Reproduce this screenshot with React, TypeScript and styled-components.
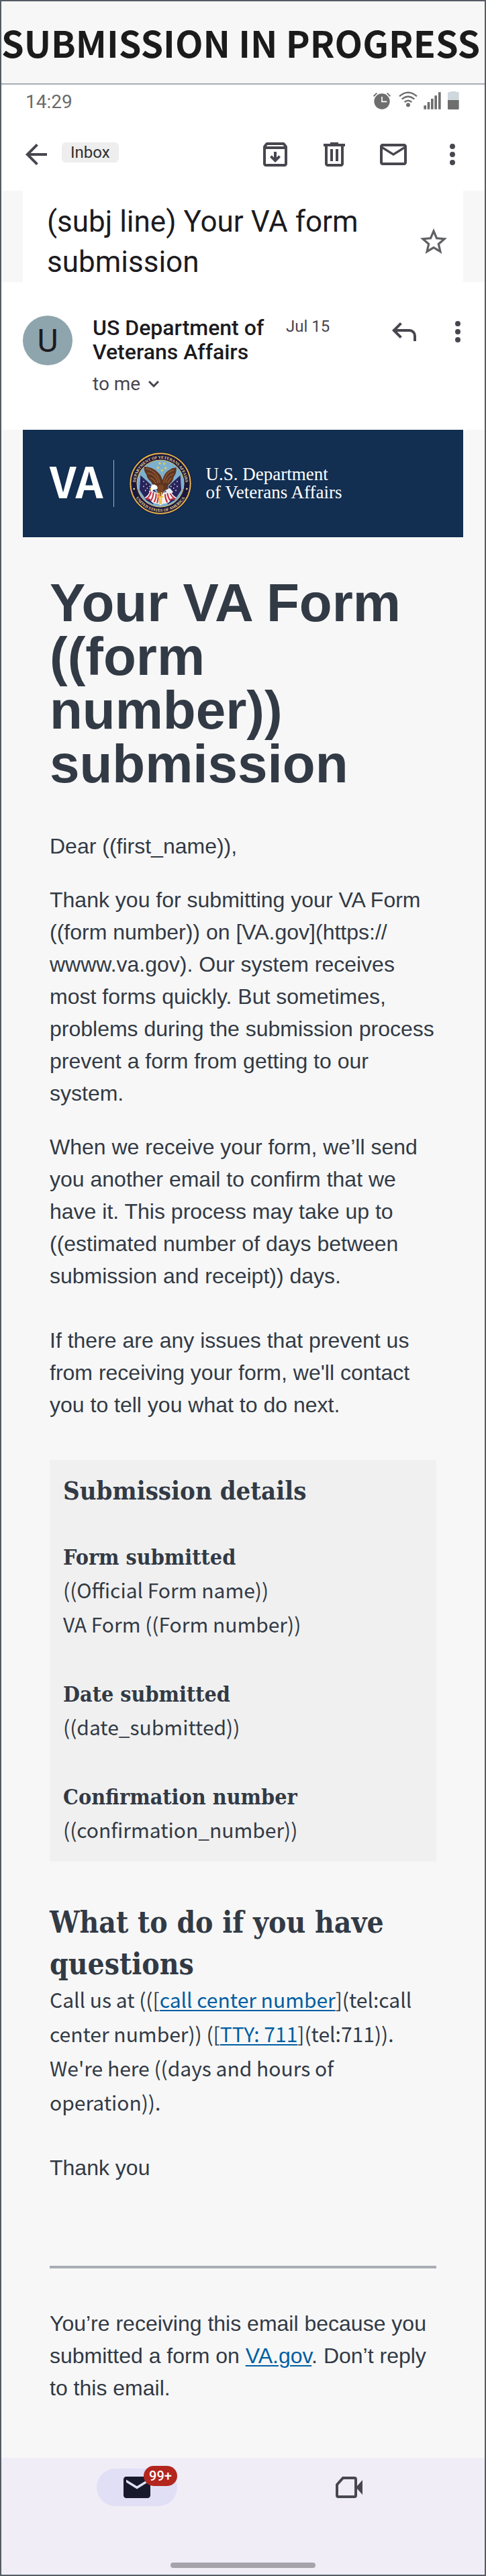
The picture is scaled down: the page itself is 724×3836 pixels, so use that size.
import React from 'react';
import styled, { createGlobalStyle } from 'styled-components';

const sans = '"Liberation Sans", Arial, sans-serif';
const source = '"Noto Sans CJK SC", "Source Sans Pro", sans-serif';
const slab = '"DejaVu Serif Condensed", "DejaVu Serif", serif';
const roboto = 'Roboto, sans-serif';

const ink = '#323a45';
const icon = '#48474f';
const muted = '#49454f';

const GlobalStyle = createGlobalStyle`
  *, *::before, *::after { box-sizing: border-box; }
  body { margin: 0; background: #f7f7f7; }
  h1, h2, h3, p, dl, dd, dt { margin: 0; }
  button { font: inherit; color: inherit; background: none; border: 0; padding: 0; cursor: pointer; }
`;

const Frame = styled.div`
  border: 2px solid #565c65;
  background: #f7f7f7;
  color: ${ink};
  font-family: ${sans};
  overflow: hidden;
`;

const BoardTitle = styled.h1`
  padding: 21px 0;
  border-bottom: 2px solid #a9aeb1;
  font: 700 54px/80px ${source};
  color: #1b1b1b;
  white-space: nowrap;
`;

const StatusBar = styled.div`
  display: flex;
  align-items: center;
  justify-content: space-between;
  height: 50px;
  padding: 2px 38px 0 36px;
  background: #fff;
  font: 400 28px/48px ${roboto};
  color: #6b6b6b;
`;

const StatusIcons = styled.svg`
  display: block;
  margin-bottom: 4px;
`;

const Toolbar = styled.div`
  display: flex;
  align-items: center;
  height: 108px;
  padding: 0 24px 0 28px;
  background: #fff;
`;

const IconButton = styled.button`
  display: block;
  flex: none;
  width: 48px;
  height: 48px;
  color: ${icon};
  svg { display: block; }
`;

const InboxChip = styled.button`
  && {
    height: 30px;
    margin: 0 auto 6px 14px;
    padding: 0 13px;
    border-radius: 6px;
    background: #eee;
    font: 400 24px/30px ${roboto};
    color: #303030;
  }
`;

const Actions = styled.div<{ $gap: number }>`
  display: flex;
  flex: none;
  gap: ${p => p.$gap}px;
`;

const SubjectPanel = styled.div`
  display: flex;
  align-items: center;
  justify-content: space-between;
  margin: 0 32px;
  padding: 0 20px 0 36px;
  background: #fff;
`;

const Subject = styled.h2`
  padding: 16px 0 0;
  flex: 0 1 500px;
  min-height: 136px;
  font: 400 44px/60px ${roboto};
  color: #1c1b1f;
`;

const StarButton = styled(IconButton)`
  margin-top: 16px;
  color: #606164;
`;

const Sender = styled.div`
  display: flex;
  align-items: flex-start;
  min-height: 220px;
  padding: 50px 16px 0 32px;
  background: #fff;
  font-family: ${roboto};
  color: #1c1b1f;
`;

const Avatar = styled.div`
  display: flex;
  align-items: center;
  justify-content: center;
  flex: none;
  width: 74px;
  height: 74px;
  border-radius: 50%;
  background: #8fa5ad;
  font-size: 48px;
`;

const SenderText = styled.div`
  width: 264px;
  margin: 0 24px 0 30px;
`;

const SenderName = styled.div`
  font-size: 32px;
  font-weight: 500;
  line-height: 36px;
`;

const Recipient = styled.button`
  && {
    display: flex;
    align-items: center;
    gap: 12px;
    margin-top: 14px;
    font: 400 28px/32px ${roboto};
    color: ${muted};
  }
`;

const SentDate = styled.time`
  margin-right: auto;
  font-size: 24px;
  line-height: 32px;
  white-space: nowrap;
  color: ${muted};
`;

const Banner = styled.div`
  display: flex;
  align-items: center;
  height: 160px;
  margin: 0 32px;
  padding-left: 40px;
  background: #122e51;
  color: #fff;
`;

const Wordmark = styled.span`
  min-width: 78px;
  margin: 0 16px 12px 0;
  font: 700 64px/92px ${source};
`;

const Divider = styled.span`
  width: 1px;
  height: 70px;
  margin-right: 22px;
  background: #a6b2c1;
`;

const Agency = styled.span`
  margin-left: 20px;
  font: 400 27px/27px "Liberation Serif", "Times New Roman", serif;
  white-space: nowrap;
`;

const Content = styled.main`
  padding: 58px 72px 80px;
`;

const Heading = styled.h1`
  margin-bottom: 58px;
  font: 700 80px/80px ${sans};
`;

const Paragraph = styled.p<{ $after?: number }>`
  margin-bottom: ${p => p.$after ?? 0}px;
  font: 400 32px/48px ${sans};
`;

const Details = styled.section`
  padding: 20px 20px 22px;
  background: #f0f0f0;
`;

const DetailsTitle = styled.h2`
  margin-bottom: 50px;
  font: 700 38px/52px ${slab};
`;

const DetailList = styled.dl`
  display: flex;
  flex-direction: column;
  gap: 56px;
`;

const Term = styled.dt`
  font: 700 32px/46px ${slab};
`;

const Value = styled.dd`
  font: 400 30px/51px ${source};
`;

const QuestionsTitle = styled.h2`
  margin: 60px 0 -4px;
  font: 700 44px/62px ${slab};
`;

const ContactText = styled.p`
  margin-bottom: 48px;
  font: 400 30px/51px ${source};
`;

const Link = styled.a`
  color: #005ea2;
  text-decoration: underline;
  text-decoration-thickness: 2px;
  text-underline-offset: 3px;
`;

const Rule = styled.hr`
  height: 4px;
  margin: 0 0 58px;
  border: 0;
  background: #a9aeb4;
`;

const BottomNav = styled.nav`
  display: flex;
  flex-direction: column;
  align-items: center;
  justify-content: space-between;
  height: 174px;
  padding: 16px 0 10px;
  background: #f0edf7;
`;

const Tabs = styled.div`
  display: flex;
  gap: 196px;
`;

const Tab = styled.button<{ $active?: boolean }>`
  && {
    position: relative;
    display: flex;
    align-items: center;
    justify-content: center;
    width: 120px;
    height: 56px;
    border-radius: 28px;
    background: ${p => (p.$active ? '#e1dff6' : 'transparent')};
    color: ${p => (p.$active ? '#181a2c' : icon)};
  }
`;

const Badge = styled.span`
  position: absolute;
  top: -4px;
  right: 0;
  width: 50px;
  height: 30px;
  border-radius: 15px;
  background: #b3261e;
  color: #fff;
  font: 500 20px/30px ${roboto};
  text-align: center;
`;

const HomeHandle = styled.div`
  width: 216px;
  height: 8px;
  border-radius: 4px;
  background: #a7a3aa;
`;

const paths = {
  back: 'M7.825 13l5.6 5.6L12 20l-8-8 8-8 1.425 1.4-5.6 5.6H20v2z',
  archive:
    'M20.54 5.23l-1.39-1.68C18.88 3.21 18.47 3 18 3H6c-.47 0-.88.21-1.16.55L3.46 5.23C3.17 5.57 3 6.02 3 6.5V19c0 1.1.9 2 2 2h14c1.1 0 2-.9 2-2V6.5c0-.48-.17-.93-.46-1.27zM6.24 5h11.52l.83 1H5.42l.82-1zM5 19V8h14v11H5zM11 10v4.2l-1.6-1.6L8 14l4 4 4-4-1.4-1.4-1.6 1.6V10z',
  trash:
    'M7 21q-.825 0-1.412-.587T5 19V6H4V4h5V3h6v1h5v2h-1v13q0 .825-.587 1.413T17 21zM17 6H7v13h10zM9 17h2V8H9zm4 0h2V8h-2z',
  mail:
    'M4 20q-.825 0-1.412-.587T2 18V6q0-.825.588-1.412T4 4h16q.825 0 1.413.588T22 6v12q0 .825-.587 1.413T20 20zm8-7L4 8v10h16V8zm0-2l8-5H4z',
  more:
    'M12 4a2 2 0 1 1 0 4 2 2 0 0 1 0-4zm0 6a2 2 0 1 1 0 4 2 2 0 0 1 0-4zm0 6a2 2 0 1 1 0 4 2 2 0 0 1 0-4z',
  star:
    'M22 9.24l-7.19-.62L12 2 9.19 8.63 2 9.24l5.46 4.73L5.82 21 12 17.27 18.18 21l-1.63-7.03zM12 15.4l-3.76 2.27 1-4.28-3.32-2.88 4.38-.38L12 6.1l1.71 4.04 4.38.38-3.32 2.88 1 4.28z',
  reply:
    'M19 19v-4q0-1.25-.875-2.125T16 12H6.825l3.6 3.6L9 17l-6-6 6-6 1.425 1.4-3.6 3.6H16q2.075 0 3.538 1.463T21 15v4z',
  mailFilled:
    'M20 4H4c-1.1 0-2 .9-2 2v12c0 1.1.9 2 2 2h16c1.1 0 2-.9 2-2V6c0-1.1-.9-2-2-2zm0 4.3l-8 4.9-8-4.9V6.2l8 4.9 8-4.9z',
};

function Icon({ name }: { name: keyof typeof paths }) {
  return (
    <svg width="48" height="48" viewBox="0 0 24 24" fill="currentColor" fillRule="evenodd" aria-hidden="true">
      <path d={paths[name]} />
    </svg>
  );
}

function PhoneStatus() {
  return (
    <StatusIcons width="128" height="28" viewBox="528 18 384 84" fill="#6e6e6e" role="img" aria-label="Alarm, Wi-Fi, signal and battery">
      <circle cx="567" cy="63" r="35" />
      <path d="M567 42v22h22" fill="none" stroke="#fff" strokeWidth="5" />
      <path d="M530 40l14-14M590 26l14 14" fill="none" stroke="#6e6e6e" strokeWidth="6" />
      <circle cx="684" cy="79" r="9" />
      <path d="M645 40q39-34 78 0M656 53q28-24 56 0M668 66q16-14 32 0" fill="none" stroke="#6e6e6e" strokeWidth="7" />
      <path d="M754 81h11v17h-11zM770 66h11v32h-11zM786 51h11v47h-11zM802 37h11v61h-11zM819 22h11v76h-11z" />
      <path d="M861 25q0-4 4-4h10v-3h22v3h9q5 0 5 4v33h-50z" fill="#cfd8dd" />
      <path d="M861 57h50v38q0 4-4 4h-42q-4 0-4-4z" />
    </StatusIcons>
  );
}

const star = (x: number, y: number) =>
  `M${x} ${y - 7}l2 5h5l-4 3 2 6-5-4-5 4 2-6-4-3h5z`;

function Seal() {
  return (
    <svg width="94" height="94" viewBox="14 26 282 282" role="img" aria-label="Seal of the Department of Veterans Affairs">
      <defs>
        <clipPath id="field"><circle cx="155" cy="167" r="104" /></clipPath>
        <path id="arcTop" d="M44 167a111 111 0 0 1 222 0" />
        <path id="arcBottom" d="M36 210a127 127 0 0 0 238 0" />
      </defs>
      <circle cx="155" cy="167" r="140" fill="#1b1840" />
      <circle cx="155" cy="167" r="134" fill="none" stroke="#d9a637" strokeWidth="6" />
      <circle cx="155" cy="167" r="134" fill="none" stroke="#f3d77c" strokeWidth="3" strokeDasharray="5 4" />
      <circle cx="155" cy="167" r="105" fill="#7db0cd" stroke="#e3c05c" strokeWidth="3" />
      <g clipPath="url(#field)">
        <path d="M66 130l44 40 34 48-22 42-30-18-30-46z" fill="#28235a" />
        <path d="M244 130l-44 40-34 48 22 42 30-18 30-46z" fill="#28235a" />
        <path d="M78 158h4m8 12h4m-16 10h4m12 8h4m8-8h4m-24 18h4m14 4h4m10-14h4M228 158h4m-16 12h4m8 10h4m-20 8h4m-16-8h4m18 18h4m-22 4h4m-18-14h4" stroke="#fff" strokeWidth="5" />
        <path d="M110 196q-8 24-26 34 10 12 24 8 8 18 26 18 20 2 21 10 3-8 22-10 18 0 26-18 16 4 24-8-20-10-28-34l-44 20z" fill="#f4f0ee" />
        <path d="M114 200q-4 24-20 34M124 206q-2 24-12 38M136 212q0 24-10 38M146 216q0 20-6 38M196 202q4 20 22 32M186 208q2 22 14 36M176 214q0 20 10 38M88 234l22 4M222 234l-22 4" fill="none" stroke="#c2283a" strokeWidth="6" />
        <path d="M82 92q-2 20 10 34 4 22 22 34 6 16 22 20l4 20 16 22 14-20 16-10 6-20q20-14 22-34 14-18 12-42-20 0-36 14-18 10-26 42-6-24-22-36-24-24-60-24z" fill="#5e3420" />
        <path d="M90 100q26 4 44 24 14 16 18 40M96 120q22 2 34 16 12 14 14 30M108 142q16 2 26 24M216 106q-24 8-34 22-10 16-12 36M214 124q-20 6-28 20-6 10-6 20M206 142q-14 8-18 24" fill="none" stroke="#8d5733" strokeWidth="5" />
        <path d="M142 176q14-8 28 2l-4 34-12 16-10-18z" fill="#7b4426" />
        <path d="M112 184q2-14 18-12 14 4 12 18l-16 4-14 12q2-12 0-22z" fill="#fff" />
        <path d="M112 186l-8 6 10 4z" fill="#efc53c" />
        <path d="M178 196l20-8 14 18-12 6-16-2z" fill="#e6eef4" />
        <path d="M148 208l4 50M160 206l-2 52M144 226h24" fill="none" stroke="#ecc03a" strokeWidth="6" />
      </g>
      <path d={[star(152, 76), star(172, 78), star(144, 96), star(178, 98), star(162, 108)].join('')} fill="#f2d24a" />
      <g fill="#efdb8c" fontFamily="Liberation Serif, serif" fontWeight="700" fontSize="18">
        <text textAnchor="middle"><textPath href="#arcTop" startOffset="50%">DEPARTMENT OF VETERANS AFFAIRS</textPath></text>
        <text textAnchor="middle"><textPath href="#arcBottom" startOffset="50%">UNITED STATES OF AMERICA</textPath></text>
      </g>
      <circle cx="37" cy="191" r="4" fill="#efdb8c" />
      <circle cx="273" cy="191" r="4" fill="#efdb8c" />
    </svg>
  );
}

export default function App() {
  return (
    <Frame>
      <GlobalStyle />
      <BoardTitle>SUBMISSION IN PROGRESS</BoardTitle>

      <StatusBar>
        <span>14:29</span>
        <PhoneStatus />
      </StatusBar>

      <Toolbar>
        <IconButton aria-label="Back"><Icon name="back" /></IconButton>
        <InboxChip>Inbox</InboxChip>
        <Actions $gap={40}>
          <IconButton aria-label="Archive"><Icon name="archive" /></IconButton>
          <IconButton aria-label="Delete"><Icon name="trash" /></IconButton>
          <IconButton aria-label="Mark unread"><Icon name="mail" /></IconButton>
          <IconButton aria-label="More options"><Icon name="more" /></IconButton>
        </Actions>
      </Toolbar>

      <SubjectPanel>
        <Subject>(subj line) Your VA form submission</Subject>
        <StarButton aria-label="Star"><Icon name="star" /></StarButton>
      </SubjectPanel>

      <Sender>
        <Avatar>U</Avatar>
        <SenderText>
          <SenderName>US Department of Veterans Affairs</SenderName>
          <Recipient>
            to me
            <svg width="16" height="10" viewBox="0 0 16 10" fill="none" stroke="currentColor" strokeWidth="3" aria-hidden="true">
              <path d="M1 1l7 7 7-7" />
            </svg>
          </Recipient>
        </SenderText>
        <SentDate>Jul 15</SentDate>
        <Actions $gap={32}>
          <IconButton aria-label="Reply"><Icon name="reply" /></IconButton>
          <IconButton aria-label="Message options"><Icon name="more" /></IconButton>
        </Actions>
      </Sender>

      <Banner>
        <Wordmark>VA</Wordmark>
        <Divider />
        <Seal />
        <Agency>U.S. Department<br />of Veterans Affairs</Agency>
      </Banner>

      <Content>
        <Heading>Your VA Form ((form number)) submission</Heading>
        <Paragraph $after={32}>Dear ((first_name)),</Paragraph>
        <Paragraph $after={32}>
          Thank you for submitting your VA Form ((form number)) on [VA.gov](https://<wbr />wwww.va.gov).
          Our system receives most forms quickly. But sometimes, problems during the submission process
          prevent a form from getting to our system.
        </Paragraph>
        <Paragraph $after={48}>
          When we receive your form, we’ll send you another email to confirm that we have it. This process
          may take up to ((estimated number of days between submission and receipt)) days.
        </Paragraph>
        <Paragraph $after={58}>
          If there are any issues that prevent us from receiving your form, we'll contact you to tell you
          what to do next.
        </Paragraph>

        <Details>
          <DetailsTitle>Submission details</DetailsTitle>
          <DetailList>
            <div>
              <Term>Form submitted</Term>
              <Value>((Official Form name))</Value>
              <Value>VA Form ((Form number))</Value>
            </div>
            <div>
              <Term>Date submitted</Term>
              <Value>((date_submitted))</Value>
            </div>
            <div>
              <Term>Confirmation number</Term>
              <Value>((confirmation_number))</Value>
            </div>
          </DetailList>
        </Details>

        <QuestionsTitle>What to do if you have questions</QuestionsTitle>
        <ContactText>
          Call us at (([<Link href="#call-center">call center number</Link>](tel:call center number)){' '}
          ([<Link href="tel:711">TTY: 711</Link>](tel:711)). We're here ((days and hours of operation)).
        </ContactText>
        <Paragraph $after={122}>Thank you</Paragraph>
        <Rule />
        <Paragraph>
          You’re receiving this email because you submitted a form on{' '}
          <Link href="https://www.va.gov">VA.gov</Link>. Don’t reply to this email.
        </Paragraph>
      </Content>

      <BottomNav>
        <Tabs>
          <Tab $active aria-label="Mail">
            <Icon name="mailFilled" />
            <Badge>99+</Badge>
          </Tab>
          <Tab aria-label="Meet">
            <svg width="48" height="48" viewBox="0 0 24 24" aria-hidden="true">
              <path d="M7.5 5H16q1 0 1 1v12q0 1-1 1H4q-1 0-1-1V10z" fill="none" stroke="currentColor" strokeWidth="2" />
              <path d="M18 11l4-4.5v11L18 13z" fill="currentColor" />
            </svg>
          </Tab>
        </Tabs>
        <HomeHandle />
      </BottomNav>
    </Frame>
  );
}
